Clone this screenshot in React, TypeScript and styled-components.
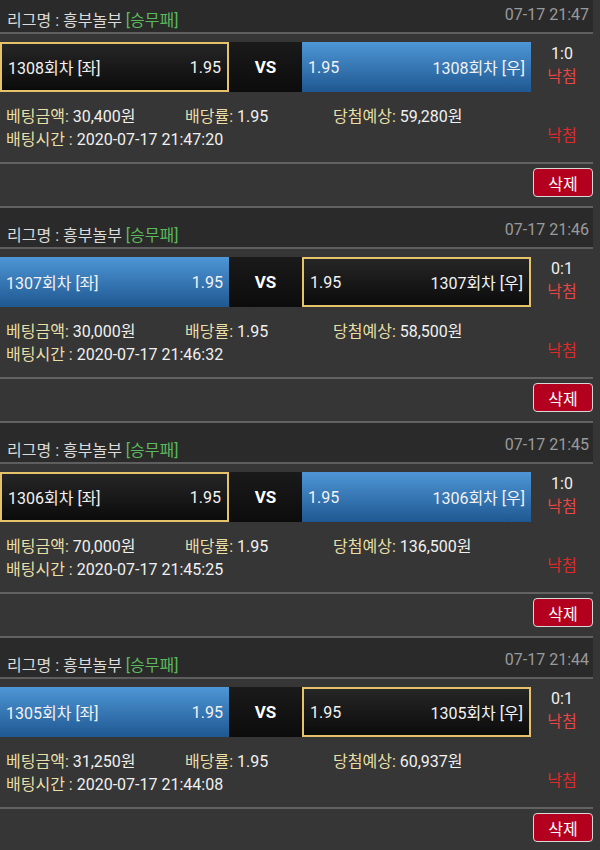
import styled, { createGlobalStyle, css } from "styled-components";

interface Bet {
  round: number;
  pick: "left" | "right";
  score: string;
  amount: string;
  expected: string;
  time: string;
  date: string;
}

const bets: Bet[] = [
  { round: 1308, pick: "right", score: "1:0", amount: "30,400", expected: "59,280", time: "2020-07-17 21:47:20", date: "07-17 21:47" },
  { round: 1307, pick: "left", score: "0:1", amount: "30,000", expected: "58,500", time: "2020-07-17 21:46:32", date: "07-17 21:46" },
  { round: 1306, pick: "right", score: "1:0", amount: "70,000", expected: "136,500", time: "2020-07-17 21:45:25", date: "07-17 21:45" },
  { round: 1305, pick: "left", score: "0:1", amount: "31,250", expected: "60,937", time: "2020-07-17 21:44:08", date: "07-17 21:44" },
];

const GlobalStyle = createGlobalStyle`
  body {
    margin: 0;
    background: #363636;
    font-family: Roboto, "Noto Sans CJK KR", sans-serif;
    overflow: hidden;
  }
`;

const BetCard = ({ bet }: { bet: Bet }) => (
  <Card>
    <Header>
      <League>
        리그명 : 흥부놀부 <Kind>[승무패]</Kind>
      </League>
      <DateText>{bet.date}</DateText>
    </Header>
    <MatchRow>
      <Side $picked={bet.pick === "left"}>
        <span>{bet.round}회차 [좌]</span>
        <span>1.95</span>
      </Side>
      <Vs>VS</Vs>
      <Side $picked={bet.pick === "right"}>
        <span>1.95</span>
        <span>{bet.round}회차 [우]</span>
      </Side>
      <Score>
        <span>{bet.score}</span>
        <Lost>낙첨</Lost>
      </Score>
    </MatchRow>
    <Info>
      <Stats>
        <Stat>
          <Label>베팅금액:</Label> {bet.amount}원
        </Stat>
        <Stat>
          <Label>배당률:</Label> 1.95
        </Stat>
        <Stat>
          <Label>당첨예상:</Label> {bet.expected}원
        </Stat>
        <TimeStat>
          <Label>배팅시간 :</Label> {bet.time}
        </TimeStat>
      </Stats>
      <Result>낙첨</Result>
    </Info>
    <Actions>
      <DeleteButton>삭제</DeleteButton>
    </Actions>
  </Card>
);

export default function App() {
  return (
    <>
      <GlobalStyle />
      <List>
        {bets.map((b) => (
          <BetCard key={b.round} bet={b} />
        ))}
      </List>
    </>
  );
}

const List = styled.div`
  margin-top: -7px;
  width: 593px;
`;

const Card = styled.div`
  display: flex;
  flex-direction: column;
  border-bottom: 2px solid #626262;
`;

const Header = styled.div`
  height: 41px;
  box-sizing: border-box;
  background: #2a2a2a;
  border-bottom: 2px solid #5e5e5e;
  display: flex;
  justify-content: space-between;
  align-items: flex-start;
  padding: 0 4px 0 7px;
  font-size: 16px;
`;

const League = styled.div`
  color: #dcdcdc;
  margin-top: 14px;
`;

const Kind = styled.span`
  color: #5cb85c;
`;

const DateText = styled.div`
  color: #9a9a9a;
  margin-top: 12px;
`;

const MatchRow = styled.div`
  margin-top: 8px;
  height: 50px;
  display: flex;
`;

const Side = styled.div<{ $picked: boolean }>`
  width: 229px;
  box-sizing: border-box;
  display: flex;
  justify-content: space-between;
  align-items: center;
  padding: 0 6px;
  font-size: 16px;
  color: #f2f2f2;
  ${({ $picked }) =>
    $picked
      ? css`
          background: linear-gradient(#4e96d6, #1f5891);
        `
      : css`
          background: linear-gradient(#262626, #0b0b0b);
          border: 2px solid #e6c26a;
        `}
`;

const Vs = styled.div`
  width: 73px;
  background: linear-gradient(#1a1a1a, #0c0c0c);
  color: #fff;
  font-weight: bold;
  font-size: 17px;
  display: flex;
  align-items: center;
  justify-content: center;
`;

const Score = styled.div`
  flex: 1;
  display: flex;
  flex-direction: column;
  align-items: center;
  color: #f0f0f0;
  font-size: 16px;
  line-height: 23px;
`;

const Lost = styled.span`
  color: #e84545;
`;

const Info = styled.div`
  height: 72px;
  box-sizing: border-box;
  border-bottom: 2px solid #626262;
  display: flex;
  padding: 11px 0 0 6px;
`;

const Stats = styled.div`
  flex: 1;
  display: grid;
  grid-template-columns: 179px 148px auto;
  grid-auto-rows: 23px;
  font-size: 16px;
  color: #f0f0f0;
`;

const Stat = styled.div`
  white-space: nowrap;
`;

const TimeStat = styled(Stat)`
  grid-column: 1 / -1;
`;

const Label = styled.span`
  color: #e9dfa6;
`;

const Result = styled.div`
  width: 62px;
  text-align: center;
  padding-top: 19px;
  color: #e02a2a;
  font-size: 16px;
`;

const Actions = styled.div`
  height: 42px;
  display: flex;
  justify-content: flex-end;
  align-items: flex-start;
  padding-top: 4px;
  box-sizing: border-box;
`;

const DeleteButton = styled.button`
  width: 60px;
  height: 29px;
  background: #b3001f;
  border: 1.5px solid #d8d8d8;
  border-radius: 4px;
  color: #fff;
  font-family: inherit;
  font-size: 16px;
  padding: 0;
`;
